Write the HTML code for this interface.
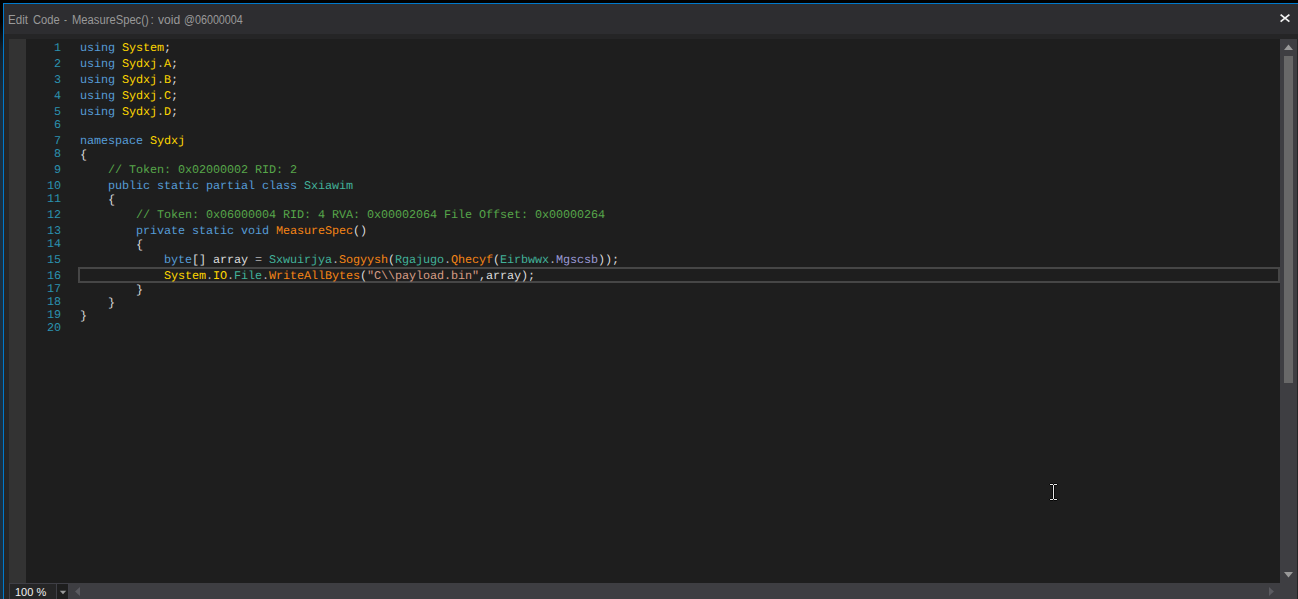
<!DOCTYPE html>
<html><head><meta charset="utf-8"><style>
html,body{margin:0;padding:0;width:1298px;height:599px;overflow:hidden;background:#000;position:relative}
div{position:absolute;box-sizing:border-box}
#lstrip{left:0;top:0;width:3px;height:599px;background:linear-gradient(#000 0px,#000 22px,#12222f 50px,#1a3042 100px,#1a3042 599px)}
#win{left:3px;top:3px;width:1295px;height:596px;background:#252526;border-left:1px solid #007acc;border-top:1px solid #007acc}
#title{left:4px;top:4px;width:1294px;height:30px;background:#2d2d30}
.tw{top:13px;transform-origin:0 0;font-family:"Liberation Sans",sans-serif;font-size:12px;line-height:14px;color:#999999;white-space:pre;}
#glyph{left:9px;top:39px;width:17px;height:544px;background:#333333}
#editor{left:26px;top:39px;width:1254px;height:544px;background:#1e1e1e}
#vscroll{left:1280px;top:39px;width:17px;height:560px;background:#3e3e42}
#thumb{left:1284px;top:56px;width:9px;height:327px;background:#686868}
#hscroll{left:69px;top:583px;width:1211px;height:16px;background:#3e3e42}
#zoomline{left:9px;top:583px;width:60px;height:1px;background:#3f3f46}
#combo{left:9px;top:583px;width:48px;height:16px;background:#252526;border-left:1px solid #3f3f46;border-top:1px solid #3f3f46;border-right:1px solid #3f3f46}
#ddbtn{left:57px;top:583px;width:12px;height:16px;background:#1e1e1e;border-top:1px solid #3f3f46;border-right:1px solid #3f3f46}
#ztext{left:15px;top:585px;font-family:"Liberation Sans",sans-serif;font-size:11px;line-height:14px;color:#f1f1f1;white-space:pre}
.ln{left:26px;width:35px;text-align:right;font-family:"Liberation Mono",monospace;font-size:11.8px;line-height:14px;color:#2b91af;white-space:pre;letter-spacing:-0.08px;text-rendering:geometricPrecision}
.cl{left:80px;font-family:"Liberation Mono",monospace;font-size:11.8px;line-height:14px;color:#dcdcdc;white-space:pre;letter-spacing:-0.08px;text-rendering:geometricPrecision}
#hl{left:78px;top:267px;width:1202px;height:16px;border:2px solid #464646}
</style></head><body>
<div id="lstrip"></div>
<div id="win"></div>
<div id="title"></div>
<div class="tw" style="left:8.3px;transform:scaleX(0.965)">Edit</div><div class="tw" style="left:32.9px;transform:scaleX(0.931)">Code</div><div class="tw" style="left:63.8px;transform:scaleX(0.750)">-</div><div class="tw" style="left:71.5px;transform:scaleX(0.935)">MeasureSpec()</div><div class="tw" style="left:150.5px;transform:scaleX(1.000)">:</div><div class="tw" style="left:158.2px;transform:scaleX(1.009)">void</div><div class="tw" style="left:183.8px;transform:scaleX(0.897)">@06000004</div>
<svg style="position:absolute;left:1279px;top:13px" width="12" height="11" viewBox="0 0 12 11"><path d="M1.6 1.6 L10.4 8.6 M10.4 1.6 L1.6 8.6" stroke="#f1f1f1" stroke-width="1.8"/></svg>
<div id="glyph"></div>
<div id="editor"></div>
<div id="hl"></div>
<div class="ln" style="top:41px">1</div><div class="cl" style="top:41px"><span style="color:#569cd6">using</span> <span style="color:#ffd700">System</span><span style="color:#dcdcdc">;</span></div><div class="ln" style="top:57px">2</div><div class="cl" style="top:57px"><span style="color:#569cd6">using</span> <span style="color:#ffd700">Sydxj</span><span style="color:#b4b4b4">.</span><span style="color:#ffd700">A</span><span style="color:#dcdcdc">;</span></div><div class="ln" style="top:73px">3</div><div class="cl" style="top:73px"><span style="color:#569cd6">using</span> <span style="color:#ffd700">Sydxj</span><span style="color:#b4b4b4">.</span><span style="color:#ffd700">B</span><span style="color:#dcdcdc">;</span></div><div class="ln" style="top:89px">4</div><div class="cl" style="top:89px"><span style="color:#569cd6">using</span> <span style="color:#ffd700">Sydxj</span><span style="color:#b4b4b4">.</span><span style="color:#ffd700">C</span><span style="color:#dcdcdc">;</span></div><div class="ln" style="top:105px">5</div><div class="cl" style="top:105px"><span style="color:#569cd6">using</span> <span style="color:#ffd700">Sydxj</span><span style="color:#b4b4b4">.</span><span style="color:#ffd700">D</span><span style="color:#dcdcdc">;</span></div><div class="ln" style="top:118px">6</div><div class="cl" style="top:118px"></div><div class="ln" style="top:134px">7</div><div class="cl" style="top:134px"><span style="color:#569cd6">namespace</span> <span style="color:#ffd700">Sydxj</span></div><div class="ln" style="top:147px">8</div><div class="cl" style="top:147px"><span style="color:#dcdcdc;position:relative;top:1px">{</span></div><div class="ln" style="top:163px">9</div><div class="cl" style="top:163px">    <span style="color:#57a64a">// Token: 0x02000002 RID: 2</span></div><div class="ln" style="top:179px">10</div><div class="cl" style="top:179px">    <span style="color:#569cd6">public</span> <span style="color:#569cd6">static</span> <span style="color:#569cd6">partial</span> <span style="color:#569cd6">class</span> <span style="color:#42b29a">Sxiawim</span></div><div class="ln" style="top:192px">11</div><div class="cl" style="top:192px">    <span style="color:#dcdcdc;position:relative;top:1px">{</span></div><div class="ln" style="top:208px">12</div><div class="cl" style="top:208px">        <span style="color:#57a64a">// Token: 0x06000004 RID: 4 RVA: 0x00002064 File Offset: 0x00000264</span></div><div class="ln" style="top:224px">13</div><div class="cl" style="top:224px">        <span style="color:#569cd6">private</span> <span style="color:#569cd6">static</span> <span style="color:#569cd6">void</span> <span style="color:#f58516">MeasureSpec</span><span style="color:#dcdcdc">()</span></div><div class="ln" style="top:237px">14</div><div class="cl" style="top:237px">        <span style="color:#dcdcdc;position:relative;top:1px">{</span></div><div class="ln" style="top:253px">15</div><div class="cl" style="top:253px">            <span style="color:#569cd6">byte</span><span style="color:#dcdcdc">[]</span> <span style="color:#dcdcdc">array</span> <span style="color:#b4b4b4">=</span> <span style="color:#42b29a">Sxwuirjya</span><span style="color:#b4b4b4">.</span><span style="color:#f58516">Sogyysh</span><span style="color:#dcdcdc">(</span><span style="color:#42b29a">Rgajugo</span><span style="color:#b4b4b4">.</span><span style="color:#f58516">Qhecyf</span><span style="color:#dcdcdc">(</span><span style="color:#42b29a">Eirbwwx</span><span style="color:#b4b4b4">.</span><span style="color:#9b9bd6">Mgscsb</span><span style="color:#dcdcdc">));</span></div><div class="ln" style="top:269px">16</div><div class="cl" style="top:269px">            <span style="color:#ffd700">System</span><span style="color:#b4b4b4">.</span><span style="color:#ffd700">IO</span><span style="color:#b4b4b4">.</span><span style="color:#42b29a">File</span><span style="color:#b4b4b4">.</span><span style="color:#f58516">WriteAllBytes</span><span style="color:#dcdcdc">(</span><span style="color:#d69d85">"C\\payload.bin"</span><span style="color:#dcdcdc">,</span><span style="color:#dcdcdc">array</span><span style="color:#dcdcdc">);</span></div><div class="ln" style="top:282px">17</div><div class="cl" style="top:282px">        <span style="color:#dcdcdc;position:relative;top:1px">}</span></div><div class="ln" style="top:295px">18</div><div class="cl" style="top:295px">    <span style="color:#dcdcdc;position:relative;top:1px">}</span></div><div class="ln" style="top:308px">19</div><div class="cl" style="top:308px"><span style="color:#dcdcdc;position:relative;top:1px">}</span></div><div class="ln" style="top:321px">20</div><div class="cl" style="top:321px"></div>
<div id="vscroll"></div>
<svg style="position:absolute;left:1284px;top:44px" width="10" height="7" viewBox="0 0 10 7"><path d="M0 6 L4.5 0.5 L9 6 Z" fill="#999999"/></svg>
<div id="thumb"></div>
<svg style="position:absolute;left:1284px;top:571px" width="10" height="7" viewBox="0 0 10 7"><path d="M0 1 L9 1 L4.5 6.5 Z" fill="#999999"/></svg>
<div id="hscroll"></div>
<svg style="position:absolute;left:74px;top:586px" width="7" height="11" viewBox="0 0 7 11"><path d="M6 1 L6 10 L1 5.5 Z" fill="#5b5b60"/></svg>
<svg style="position:absolute;left:1268px;top:586px" width="7" height="11" viewBox="0 0 7 11"><path d="M1 1 L1 10 L6 5.5 Z" fill="#5b5b60"/></svg>
<div id="combo"></div>
<div id="ddbtn"></div>
<svg style="position:absolute;left:59px;top:590px" width="8" height="6" viewBox="0 0 8 6"><path d="M0.8 0.8 L7.2 0.8 L4 4.2 Z" fill="#999999"/></svg>
<div id="ztext">100 %</div>
<svg style="position:absolute;left:1049px;top:483px" width="9" height="18" viewBox="0 0 9 18" shape-rendering="crispEdges"><path d="M1 0h3v1h-3z M5 0h3v1h-3z M0 1h1v1h-1z M4 1h1v1h-1z M8 1h1v1h-1z M1 2h3v1h-3z M5 2h3v1h-3z M3 3h1v12h-1z M5 3h1v12h-1z M1 15h3v1h-3z M5 15h3v1h-3z M0 16h1v1h-1z M4 16h1v1h-1z M8 16h1v1h-1z M1 17h3v1h-3z M5 17h3v1h-3z" fill="#080808"/><path d="M1 1h3v1h-3z M5 1h3v1h-3z M4 2h1v14h-1z M1 16h3v1h-3z M5 16h3v1h-3z" fill="#e8e8e8"/></svg>
</body></html>
